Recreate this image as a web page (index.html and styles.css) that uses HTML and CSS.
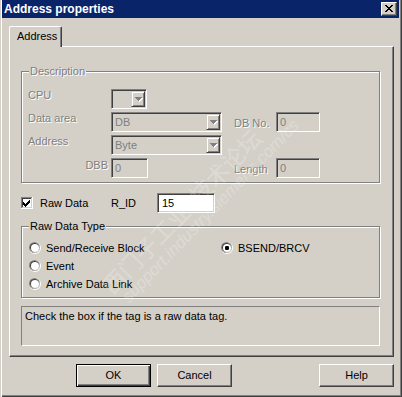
FILE: index.html
```html
<!DOCTYPE html>
<html>
<head>
<meta charset="utf-8">
<title>Address properties</title>
<link rel="stylesheet" href="styles.css">
</head>
<body>
<div class="window">
  <div class="titlebar">
    <span class="title">Address properties</span>
    <span class="close-btn">
      <svg width="8" height="7" viewBox="0 0 8 7"><path d="M0 0h2v1h-2zM6 0h2v1h-2zM1 1h2v1h-2zM5 1h2v1h-2zM2 2h4v1h-4zM3 3h2v1h-2zM2 4h4v1h-4zM1 5h2v1h-2zM5 5h2v1h-2zM0 6h2v1h-2zM6 6h2v1h-2z" fill="#000"/></svg>
    </span>
  </div>
  <div class="client">
    <div class="tabs"><div class="tab">Address</div></div>
    <div class="panel">
      <div class="group desc">
        <span class="group-title disabled">Description</span>
        <div class="desc-grid">
          <span class="lbl disabled r1">CPU</span>
          <div class="combo cpu r1 c2"><span class="val"></span><span class="ddbtn"><svg width="8" height="5" viewBox="0 0 8 5"><path d="M1 1h7v1h-7zM2 2h5v1h-5zM3 3h3v1h-3zM4 4h1v1h-1z" fill="#fff"/><path d="M0 0h7v1h-7zM1 1h5v1h-5zM2 2h3v1h-3zM3 3h1v1h-1z" fill="#808080"/></svg></span></div>

          <span class="lbl disabled r2">Data area</span>
          <div class="combo wide r2 c2"><span class="val">DB</span><span class="ddbtn"><svg width="8" height="5" viewBox="0 0 8 5"><path d="M1 1h7v1h-7zM2 2h5v1h-5zM3 3h3v1h-3zM4 4h1v1h-1z" fill="#fff"/><path d="M0 0h7v1h-7zM1 1h5v1h-5zM2 2h3v1h-3zM3 3h1v1h-1z" fill="#808080"/></svg></span></div>
          <span class="lbl2 disabled r2 c4">DB No.</span>
          <div class="field r2 c5 dbno">0</div>

          <span class="lbl disabled r3">Address</span>
          <div class="combo wide r3 c2"><span class="val">Byte</span><span class="ddbtn"><svg width="8" height="5" viewBox="0 0 8 5"><path d="M1 1h7v1h-7zM2 2h5v1h-5zM3 3h3v1h-3zM4 4h1v1h-1z" fill="#fff"/><path d="M0 0h7v1h-7zM1 1h5v1h-5zM2 2h3v1h-3zM3 3h1v1h-1z" fill="#808080"/></svg></span></div>

          <span class="lbl disabled r4 right">DBB</span>
          <div class="field r4 c2 dbb">0</div>
          <span class="lbl2 disabled r4 c4">Length</span>
          <div class="field r4 c5 len">0</div>
        </div>
      </div>

      <div class="rawrow">
        <span class="chk-wrap">
          <svg class="chk" width="12" height="12" viewBox="0 0 12 12">
            <rect x="0" y="0" width="12" height="12" fill="#fff"/>
            <rect x="0" y="0" width="11" height="11" fill="#808080"/>
            <rect x="1" y="1" width="10" height="10" fill="#d4d0c8"/>
            <rect x="1" y="1" width="9" height="9" fill="#404040"/>
            <rect x="2" y="2" width="8" height="8" fill="#fff"/>
            <path d="M8 3h1v1h-1zM7 4h2v1h-2zM2 5h1v1h-1zM6 5h3v1h-3zM2 6h2v1h-2zM5 6h3v1h-3zM2 7h5v1h-5zM3 8h3v1h-3zM4 9h1v1h-1z" fill="#000"/>
          </svg>
          <span class="txt">Raw Data</span>
        </span>
        <span class="rid-lbl">R_ID</span>
        <div class="field white rid">15</div>
      </div>

      <div class="group rdt">
        <span class="group-title">Raw Data Type</span>
        <div class="radio-grid">
          <label class="radio"><svg width="12" height="12" viewBox="0 0 12 12"><circle cx="6" cy="6" r="6" fill="#fff"/><circle cx="5.5" cy="5.5" r="5.5" fill="#808080"/><circle cx="6" cy="6" r="5" fill="#d4d0c8"/><circle cx="5.6" cy="5.6" r="4.6" fill="#404040"/><circle cx="6" cy="6" r="4" fill="#fff"/></svg><span>Send/Receive Block</span></label>
          <label class="radio"><svg width="12" height="12" viewBox="0 0 12 12"><circle cx="6" cy="6" r="6" fill="#fff"/><circle cx="5.5" cy="5.5" r="5.5" fill="#808080"/><circle cx="6" cy="6" r="5" fill="#d4d0c8"/><circle cx="5.6" cy="5.6" r="4.6" fill="#404040"/><circle cx="6" cy="6" r="4" fill="#fff"/><rect x="4" y="4" width="4" height="4" rx="1.2" fill="#000"/></svg><span>BSEND/BRCV</span></label>
          <label class="radio"><svg width="12" height="12" viewBox="0 0 12 12"><circle cx="6" cy="6" r="6" fill="#fff"/><circle cx="5.5" cy="5.5" r="5.5" fill="#808080"/><circle cx="6" cy="6" r="5" fill="#d4d0c8"/><circle cx="5.6" cy="5.6" r="4.6" fill="#404040"/><circle cx="6" cy="6" r="4" fill="#fff"/></svg><span>Event</span></label>
          <span></span>
          <label class="radio"><svg width="12" height="12" viewBox="0 0 12 12"><circle cx="6" cy="6" r="6" fill="#fff"/><circle cx="5.5" cy="5.5" r="5.5" fill="#808080"/><circle cx="6" cy="6" r="5" fill="#d4d0c8"/><circle cx="5.6" cy="5.6" r="4.6" fill="#404040"/><circle cx="6" cy="6" r="4" fill="#fff"/></svg><span>Archive Data Link</span></label>
        </div>
      </div>

      <div class="helpbox">Check the box if the tag is a raw data tag.</div>
    </div>

    <div class="buttons">
      <div class="btn default ok">OK</div>
      <div class="btn cancel">Cancel</div>
      <div class="btn help">Help</div>
    </div>
  </div>

  <div class="watermark">
    <span class="wm-cn">西门子工业&nbsp;&nbsp;技术论坛</span>
    <span class="wm-en">support.industry.siemens.com/cs</span>
  </div>
</div>
</body>
</html>
```

FILE: styles.css
```css
html, body {
  margin: 0;
  padding: 0;
  background: #d4d0c8;
}

body {
  font-family: "Liberation Sans", Arial, sans-serif;
  font-size: 11px;
  line-height: 13px;
  color: #000;
}

.window {
  position: relative;
  width: 402px;
  height: 397px;
  box-sizing: border-box;
  padding: 0 3px 0 2px;
  background: #d4d0c8;
  overflow: hidden;
  box-shadow: inset 1px 0 0 #d4d0c8, inset 2px 0 0 #fff,
              inset -1px -1px 0 #404040, inset -2px -2px 0 #808080;
}

.titlebar {
  height: 18px;
  background: #0a246a;
  display: flex;
  align-items: center;
  justify-content: space-between;
  padding: 0 2px 0 2px;
}

.title {
  color: #fff;
  font-weight: bold;
  font-size: 12px;
  line-height: 18px;
}

.close-btn {
  width: 16px;
  height: 14px;
  box-sizing: border-box;
  background: #d4d0c8;
  border: 1px solid;
  border-color: #fff #404040 #404040 #fff;
  box-shadow: inset -1px -1px 0 #808080;
  display: flex;
  align-items: center;
  justify-content: center;
}

.close-btn svg {
  display: block;
  margin: 0 1px 1px 0;
}

.client {
  padding: 8px 5px 0 7px;
}

.tabs {
  display: flex;
  height: 20px;
}

.tab {
  position: relative;
  z-index: 1;
  width: 53px;
  height: 21px;
  box-sizing: border-box;
  background: #d4d0c8;
  border-top: 1px solid #fff;
  border-left: 1px solid #fff;
  border-right: 1px solid #404040;
  box-shadow: inset -1px 0 0 #808080;
  border-radius: 2px 2px 0 0;
  padding: 3px 0 0 7px;
}

.panel {
  width: 385px;
  height: 311px;
  box-sizing: border-box;
  border: 1px solid;
  border-color: #fff #404040 #404040 #fff;
  box-shadow: inset -1px -1px 0 #808080;
  padding: 24px 0 0 11px;
}

.group {
  position: relative;
  width: 359px;
  box-sizing: border-box;
  border: 1px solid #808080;
  box-shadow: inset 1px 1px 0 #fff, 1px 1px 0 #fff;
}

.group-title {
  position: absolute;
  top: -7px;
  left: 7px;
  padding: 0 1px;
  background: #d4d0c8;
  line-height: 13px;
}

.disabled {
  color: #808080;
  text-shadow: 1px 1px 0 #fff;
}

.desc {
  height: 112px;
  padding: 17px 0 0 6px;
}

.desc-grid {
  display: grid;
  grid-template-columns: 83px 111px 12px 42px 44px;
  grid-template-rows: repeat(4, 20px);
  row-gap: 3px;
}

.r1 { grid-row: 1; }
.r2 { grid-row: 2; }
.r3 { grid-row: 3; }
.r4 { grid-row: 4; }
.c2 { grid-column: 2; }
.c4 { grid-column: 4; }
.c5 { grid-column: 5; }

.lbl {
  grid-column: 1;
  align-self: start;
  white-space: nowrap;
}

.lbl.right {
  text-align: right;
  padding-right: 3px;
  margin-top: 1px;
}

.lbl2 {
  align-self: center;
  white-space: nowrap;
  margin-top: 2px;
}

.combo, .field {
  height: 20px;
  box-sizing: border-box;
  border: 1px solid;
  border-color: #808080 #fff #fff #808080;
  box-shadow: inset 1px 1px 0 #404040, inset -1px -1px 0 #d4d0c8;
  background: #d4d0c8;
}

.combo {
  display: flex;
  align-items: stretch;
  padding: 1px;
}

.combo.cpu { width: 36px; }
.combo.wide { width: 111px; }

.combo .val {
  flex: 1;
  color: #808080;
  padding-left: 2px;
  line-height: 16px;
}

.ddbtn {
  width: 14px;
  box-sizing: border-box;
  border: 1px solid;
  border-color: #d4d0c8 #404040 #404040 #d4d0c8;
  box-shadow: inset 1px 1px 0 #fff, inset -1px -1px 0 #808080;
  display: flex;
  align-items: center;
  justify-content: center;
}

.ddbtn svg {
  display: block;
  margin: 1px 0 0 1px;
}

.field {
  color: #808080;
  padding: 0 0 0 3px;
  line-height: 18px;
}

.field.dbb { width: 37px; }
.field.dbno { width: 44px; }
.field.len { width: 44px; }

.field.white {
  background: #fff;
  color: #000;
}

.rawrow {
  display: flex;
  align-items: center;
  height: 20px;
  margin-top: 10px;
}

.chk-wrap {
  display: flex;
  align-items: center;
  width: 90px;
}

.chk {
  display: block;
  margin-right: 7px;
}

.rid-lbl {
  width: 46px;
}

.field.rid {
  width: 58px;
  padding-left: 4px;
}

.rdt {
  height: 72px;
  margin-top: 13px;
  padding: 12px 0 0 7px;
}

.radio-grid {
  display: grid;
  grid-template-columns: 192px auto;
  grid-auto-rows: 18px;
}

.radio {
  display: flex;
  align-items: center;
  white-space: nowrap;
}

.radio svg {
  display: block;
  margin-right: 5px;
  flex: none;
}

.helpbox {
  width: 359px;
  height: 40px;
  box-sizing: border-box;
  margin-top: 8px;
  border: 1px solid;
  border-color: #808080 #fff #fff #808080;
  padding: 3px 3px;
}

.buttons {
  display: flex;
  margin-top: 7px;
}

.btn {
  width: 75px;
  height: 23px;
  box-sizing: border-box;
  border: 1px solid;
  border-color: #fff #404040 #404040 #fff;
  box-shadow: inset -1px -1px 0 #808080;
  text-align: center;
  line-height: 21px;
  background: #d4d0c8;
}

.btn.default {
  border-color: #000;
  box-shadow: inset 1px 1px 0 #fff, inset -1px -1px 0 #404040, inset -2px -2px 0 #808080;
}

.btn.ok { margin-left: 67px; }
.btn.cancel { margin-left: 6px; }
.btn.help { margin-left: auto; }

.watermark {
  position: absolute;
  left: 96px;
  top: 280px;
  transform: rotate(-46deg);
  transform-origin: 0 0;
  pointer-events: none;
  color: #fff;
  opacity: 0.22;
  display: flex;
  flex-direction: column;
}

.wm-cn {
  font-family: "Noto Sans CJK SC", sans-serif;
  font-size: 23px;
  line-height: 26px;
  white-space: nowrap;
}

.wm-en {
  font-family: "Liberation Sans", Arial, sans-serif;
  font-style: italic;
  font-size: 17px;
  line-height: 18px;
  white-space: nowrap;
  margin-left: 6px;
}
```
